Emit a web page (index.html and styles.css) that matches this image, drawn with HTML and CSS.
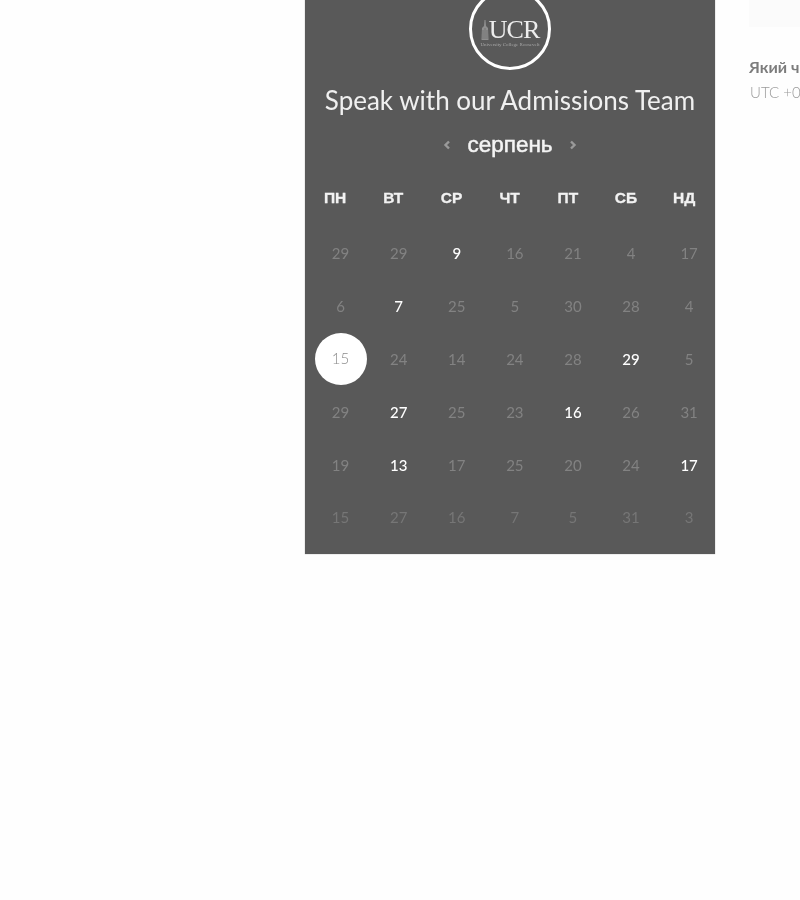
FILE: index.html
```html
<!DOCTYPE html>
<html lang="uk">
<head>
<meta charset="utf-8">
<title>Speak with our Admissions Team</title>
<link rel="stylesheet" href="styles.css">
</head>
<body>
<div class="page">
  <main class="card">
    <div class="logo">
      <div class="logo-row">
        <svg class="tower" width="8" height="20" viewBox="0 0 8 20" aria-hidden="true">
          <path d="M3.5 0 L4.5 0 L5 6 L7 8 L7.5 20 L0.5 20 L1 8 L3 6 Z" fill="#8f8f8f"/>
          <path d="M2 10V19M4 8V19M6 10V19" stroke="#6c6c6c" stroke-width="0.8"/>
        </svg>
        <span class="logo-name">UCR</span>
      </div>
      <span class="logo-sub">University College Roosevelt</span>
    </div>
    <h1 class="title">Speak with our Admissions Team</h1>
    <div class="month">
      <svg class="chev" width="8" height="12" viewBox="0 0 8 12" aria-hidden="true"><path d="M6 2.5 L2.5 6 L6 9.5" fill="none" stroke="#9a9a9a" stroke-width="2.4"/></svg>
      <span class="month-name">серпень</span>
      <svg class="chev" width="8" height="12" viewBox="0 0 8 12" aria-hidden="true"><path d="M2 2.5 L5.5 6 L2 9.5" fill="none" stroke="#9a9a9a" stroke-width="2.4"/></svg>
    </div>
    <div class="grid heads">
      <span>ПН</span><span>ВТ</span><span>СР</span><span>ЧТ</span><span>ПТ</span><span>СБ</span><span>НД</span>
    </div>
    <div class="grid days">
      <span>29</span><span>29</span><span class="on">9</span><span>16</span><span>21</span><span>4</span><span>17</span>
      <span>6</span><span class="on">7</span><span>25</span><span>5</span><span>30</span><span>28</span><span>4</span>
      <span class="sel">15</span><span>24</span><span>14</span><span>24</span><span>28</span><span class="on">29</span><span>5</span>
      <span>29</span><span class="on">27</span><span>25</span><span>23</span><span class="on">16</span><span>26</span><span>31</span>
      <span>19</span><span class="on">13</span><span>17</span><span>25</span><span>20</span><span>24</span><span class="on">17</span>
      <span class="dim">15</span><span class="dim">27</span><span class="dim">16</span><span class="dim">7</span><span class="dim">5</span><span class="dim">31</span><span class="dim">3</span>
    </div>
  </main>
  <aside class="side">
    <div class="side-box"></div>
    <h2 class="side-title">Який ч</h2>
    <p class="side-zone">UTC +0</p>
  </aside>
</div>
</body>
</html>
```

FILE: styles.css
```css
html, body {
  margin: 0;
  height: 100%;
  background: #fefefe;
  overflow: hidden;
}

.page {
  display: flex;
  align-items: flex-start;
  width: 800px;
  height: 900px;
  padding-left: 305px;
  box-sizing: border-box;
  overflow: hidden;
}

.card {
  flex: none;
  width: 410px;
  height: 554px;
  box-sizing: border-box;
  background: #595959;
  box-shadow: 0 0 1px #999;
  color: #fff;
  filter: blur(0.4px);
  display: flex;
  flex-direction: column;
  align-items: center;
  font-family: "Lato", "Liberation Sans", sans-serif;
}

.logo {
  flex: none;
  width: 82px;
  height: 82px;
  margin-top: -12px;
  box-sizing: border-box;
  border: 3px solid #fff;
  border-radius: 50%;
  display: flex;
  flex-direction: column;
  align-items: center;
  justify-content: center;
  padding-top: 7px;
}

.logo-row {
  display: flex;
  align-items: flex-end;
  gap: 0;
  height: 22px;
  padding-top: 1px;
}

.tower {
  margin-bottom: 1px;
}

.logo-name {
  font-family: "Liberation Serif", serif;
  font-size: 26px;
  line-height: 22px;
  letter-spacing: -1px;
  color: #ededed;
}

.logo-sub {
  margin-top: 1px;
  font-family: "Liberation Serif", serif;
  font-size: 5px;
  line-height: 5px;
  color: #a8a8a8;
  white-space: nowrap;
}

.title {
  margin: 14px 0 0;
  font-size: 26px;
  line-height: 32px;
  font-weight: 400;
  color: #f0f0f0;
  white-space: nowrap;
}

.month {
  display: flex;
  align-items: center;
  gap: 16.5px;
  margin-top: 14px;
  height: 30px;
}

.month-name {
  font-family: "Liberation Sans", sans-serif;
  font-size: 22.5px;
  line-height: 30px;
  color: #f4f4f4;
  -webkit-text-stroke: 0.5px #f4f4f4;
}

.chev {
  margin-top: -1px;
}

.grid {
  display: grid;
  align-self: flex-start;
  text-align: center;
}

.heads {
  grid-template-columns: repeat(7, 58.2px);
  margin-top: 28px;
  margin-left: 1px;
  font-family: "Liberation Sans", sans-serif;
  font-size: 15.5px;
  font-weight: 700;
  line-height: 20px;
  color: #f2f2f2;
  -webkit-text-stroke: 0.3px #f2f2f2;
}

.days {
  grid-template-columns: repeat(7, 58.1px);
  margin-top: 19px;
  margin-left: 6.5px;
  grid-auto-rows: 52.8px;
  font-size: 15px;
  color: #828282;
}

.days span {
  display: flex;
  align-items: center;
  justify-content: center;
}

.days .on {
  color: #fff;
  font-weight: 500;
}

.days .dim {
  color: #767676;
}

.days .sel {
  justify-self: center;
  width: 52px;
  height: 50px;
  padding-bottom: 2px;
  border-radius: 50%;
  background: #fff;
  color: #8c8c8c;
  font-weight: 300;
}

.side {
  flex: none;
  width: 200px;
  margin-left: 34px;
  font-family: "Lato", "Liberation Sans", sans-serif;
  filter: blur(0.3px);
}

.side-box {
  height: 27px;
  width: 100%;
  background: #fbfbfb;
}

.side-title {
  margin: 30px 0 0;
  font-size: 16px;
  line-height: 20px;
  font-weight: 700;
  color: #7c7c7c;
}

.side-zone {
  margin: 5px 0 0 1px;
  font-size: 15px;
  line-height: 20px;
  font-weight: 300;
  color: #9a9a9a;
}
```
